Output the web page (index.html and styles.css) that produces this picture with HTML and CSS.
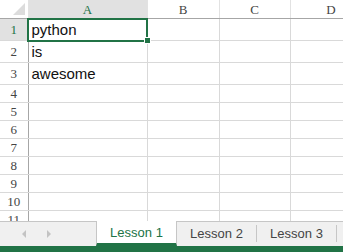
FILE: index.html
```html
<!DOCTYPE html>
<html lang="en">
<head>
  <meta charset="UTF-8">
  <title>Sheet</title>
  <link rel="stylesheet" href="styles.css">
</head>
<body>

  <div class="sheet">
    <table class="grid">
      <colgroup>
        <col class="c-row">
        <col class="c-a">
        <col class="c-b">
        <col class="c-c">
        <col class="c-d">
      </colgroup>
      <thead>
        <tr>
          <th class="corner"><span class="tri"></span></th>
          <th class="col sel">A</th>
          <th class="col">B</th>
          <th class="col">C</th>
          <th class="col">D</th>
        </tr>
      </thead>
      <tbody>
        <tr class="tall">
          <th class="row sel">1</th>
          <td class="active">python<span class="handle"></span></td>
          <td></td><td></td><td></td>
        </tr>
        <tr class="tall">
          <th class="row">2</th>
          <td>is</td><td></td><td></td><td></td>
        </tr>
        <tr class="tall">
          <th class="row">3</th>
          <td>awesome</td><td></td><td></td><td></td>
        </tr>
        <tr><th class="row">4</th><td></td><td></td><td></td><td></td></tr>
        <tr><th class="row">5</th><td></td><td></td><td></td><td></td></tr>
        <tr><th class="row">6</th><td></td><td></td><td></td><td></td></tr>
        <tr><th class="row">7</th><td></td><td></td><td></td><td></td></tr>
        <tr><th class="row">8</th><td></td><td></td><td></td><td></td></tr>
        <tr><th class="row">9</th><td></td><td></td><td></td><td></td></tr>
        <tr><th class="row">10</th><td></td><td></td><td></td><td></td></tr>
        <tr><th class="row">11</th><td></td><td></td><td></td><td></td></tr>
      </tbody>
    </table>
  </div>

  <div class="tabs">
    <div class="nav">
      <span class="arrow left"></span>
      <span class="arrow right"></span>
    </div>
    <div class="tab on">Lesson 1</div>
    <div class="tab">Lesson 2</div>
    <div class="tab">Lesson 3</div>
    <div class="tab rest"></div>
  </div>

  <div class="status"></div>

</body>
</html>
```

FILE: styles.css
```css
body {
  margin: 0;
  width: 343px;
  height: 252px;
  overflow: hidden;
  background: #fff;
  font-family: 'Liberation Sans', sans-serif;
}
.sheet {
  height: 221px;
  overflow: hidden;
}
.grid {
  border-collapse: collapse;
  table-layout: fixed;
  width: 372px;
}
.c-row { width: 28px; }
.c-a { width: 119px; }
.c-b { width: 72px; }
.c-c { width: 71px; }
.c-d { width: 82px; }

th, td {
  padding: 0;
  border: 1px solid #d9d9d9;
  height: 17px;
  overflow: hidden;
  white-space: nowrap;
}
th {
  font-family: 'Liberation Serif', serif;
  font-weight: normal;
  font-size: 13px;
  line-height: 14px;
  color: #444;
  background: #fff;
}
thead th {
  height: 16px;
  padding-top: 2px;
  border-top: none;
  border-bottom: 1px solid #a6a6a6;
  border-left-color: #e2e2e2;
  border-right-color: #e2e2e2;
  vertical-align: middle;
}
.corner {
  position: relative;
  border-left: none;
}
.tri {
  position: absolute;
  right: 3px;
  bottom: 3px;
  width: 0;
  height: 0;
  border-left: 12px solid transparent;
  border-bottom: 12px solid #dcdcdc;
}
th.row {
  border-left: none;
  border-right: 1px solid #a6a6a6;
  text-align: center;
  vertical-align: middle;
}
th.sel {
  background: #e1e1e1;
  color: #217346;
}
tr.tall th, tr.tall td {
  height: 21px;
}
td {
  font-size: 15px;
  color: #111;
  padding-left: 3px;
  vertical-align: bottom;
  line-height: 20px;
}
td.active {
  position: relative;
  overflow: visible;
  outline: 2px solid #217346;
  outline-offset: -1px;
}
.handle {
  position: absolute;
  right: -4px;
  bottom: -4px;
  width: 5px;
  height: 5px;
  background: #217346;
  border: 1px solid #fff;
}

.tabs {
  display: flex;
  height: 24px;
  background: #f0f0f0;
  border-top: 1px solid #c6c6c6;
}
.nav {
  width: 96px;
  display: flex;
  align-items: center;
  gap: 21px;
  padding-left: 22px;
  box-sizing: border-box;
}
.arrow {
  width: 0;
  height: 0;
  border-top: 4px solid transparent;
  border-bottom: 4px solid transparent;
}
.arrow.left { border-right: 4px solid #c3c3c3; }
.arrow.right { border-left: 4px solid #c3c3c3; }

.tab {
  width: 80px;
  font-size: 13px;
  color: #444;
  display: flex;
  align-items: center;
  justify-content: center;
  border-right: 1px solid #c6c6c6;
  margin: 3px 0 4px;
  box-sizing: border-box;
}
.tab.on {
  width: 81px;
  margin: -1px 0 0;
  background: #fff;
  color: #217346;
  border-left: 1px solid #c6c6c6;
  border-right: 1px solid #c6c6c6;
  border-bottom: 3px solid #217346;
  padding-top: 1px;
}
.tab.rest {
  border-right: none;
  flex: 1;
}
.status {
  height: 6px;
  background: #217346;
}
```
